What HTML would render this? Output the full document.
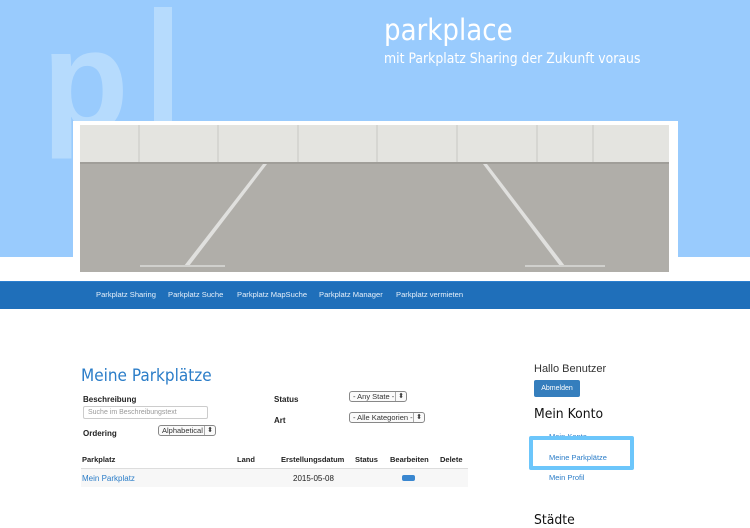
<!DOCTYPE html>
<html><head><meta charset="utf-8"><style>
*{margin:0;padding:0;box-sizing:border-box}
body{width:750px;height:523px;overflow:hidden;background:#fff;font-family:"Liberation Sans",sans-serif;position:relative}
.hdr{position:absolute;left:0;top:0;width:750px;height:257px;background:#99cbfd;overflow:hidden}
.big{position:absolute;color:#b6dbfd;font-size:142px;line-height:1;font-weight:bold;font-family:"Liberation Sans",sans-serif}
.t1{position:absolute;left:384px;top:13px;color:#fff;font-size:29px;font-family:"DejaVu Sans",sans-serif;transform:scaleX(0.9);transform-origin:left top}
.t2{position:absolute;left:384px;top:51px;color:#fff;font-size:14px;font-family:"DejaVu Sans",sans-serif;transform:scaleX(0.89);transform-origin:left top;white-space:nowrap}
.frame{position:absolute;left:73px;top:121px;width:605px;height:159px;background:#fff}
.nav{position:absolute;left:0;top:281px;width:750px;height:28px;background:#1f6fba;border-top:1px solid #2b7fcf}
.nav span{position:absolute;top:8px;color:#e6f0fa;font-size:7.6px;white-space:nowrap}
h2{position:absolute;left:81px;top:366px;color:#2b7dc8;font-size:17px;font-weight:normal;font-family:"DejaVu Sans",sans-serif;transform:scaleX(0.9);transform-origin:left top}
.lb{position:absolute;font-size:8px;font-weight:bold;color:#222}
.sel{position:absolute;height:11px;border:1px solid #888;border-radius:3px;font-size:7.5px;color:#333;padding-left:3px;line-height:9px;background:#fafafa;white-space:nowrap;overflow:hidden}
.sel:after{content:"⬍";position:absolute;right:2px;top:0;font-size:7px;border-left:1px solid #aaa;padding-left:2px;background:#fafafa}
.inp{position:absolute;left:83px;top:406px;width:125px;height:13px;border:1px solid #ccc;border-radius:2px;font-size:7px;color:#999;padding-left:4px;line-height:11px}
.th{position:absolute;top:455px;font-size:7.5px;font-weight:bold;color:#222}
.row{position:absolute;left:81px;top:468px;width:387px;height:19px;background:#f7f7f7;border-top:1px solid #ddd}
.side{position:absolute;font-family:"DejaVu Sans",sans-serif}
</style></head><body>
<div class="hdr">
<div class="big" style="left:42px;top:10px">p</div>
<div style="position:absolute;left:154px;top:7px;width:18px;height:250px;background:#b6dbfd"></div>
<div class="t1">parkplace</div>
<div class="t2">mit Parkplatz Sharing der Zukunft voraus</div>
</div>
<div class="frame"></div>
<svg style="position:absolute;left:80px;top:125px" width="589" height="147" viewBox="0 0 589 147">
<rect width="589" height="38" fill="#e4e4e0"/>
<rect y="38" width="589" height="109" fill="#b0aea9"/>
<rect y="37" width="589" height="2" fill="#a09e99"/>
<g stroke="#c9c9c5" stroke-width="1"><line x1="59" y1="0" x2="59" y2="37"/><line x1="138" y1="0" x2="138" y2="37"/><line x1="218" y1="0" x2="218" y2="37"/><line x1="297" y1="0" x2="297" y2="37"/><line x1="377" y1="0" x2="377" y2="37"/><line x1="457" y1="0" x2="457" y2="37"/><line x1="513" y1="0" x2="513" y2="37"/></g>
<polygon points="183,39 187,39 109,141 104,141" fill="#e0e0de"/>
<polygon points="403,39 407,39 485,141 480,141" fill="#e0e0de"/>
<rect x="60" y="140" width="85" height="2" fill="#d0d0cd"/>
<rect x="445" y="140" width="80" height="2" fill="#d0d0cd"/>
</svg>
<div class="nav">
<span style="left:96px">Parkplatz Sharing</span>
<span style="left:168px">Parkplatz Suche</span>
<span style="left:237px">Parkplatz MapSuche</span>
<span style="left:319px">Parkplatz Manager</span>
<span style="left:396px">Parkplatz vermieten</span>
</div>
<h2>Meine Parkplätze</h2>
<div class="lb" style="left:83px;top:395px">Beschreibung</div>
<div class="inp">Suche im Beschreibungstext</div>
<div class="lb" style="left:83px;top:429px">Ordering</div>
<div class="sel" style="left:158px;top:425px;width:58px">Alphabetical</div>
<div class="lb" style="left:274px;top:395px">Status</div>
<div class="sel" style="left:349px;top:391px;width:58px">- Any State -</div>
<div class="lb" style="left:274px;top:416px">Art</div>
<div class="sel" style="left:349px;top:412px;width:76px">- Alle Kategorien -</div>
<div class="th" style="left:82px">Parkplatz</div>
<div class="th" style="left:237px">Land</div>
<div class="th" style="left:281px">Erstellungsdatum</div>
<div class="th" style="left:355px">Status</div>
<div class="th" style="left:390px">Bearbeiten</div>
<div class="th" style="left:440px">Delete</div>
<div class="row">
<span style="position:absolute;left:1px;top:5px;font-size:8px;color:#2b7dc8">Mein Parkplatz</span>
<span style="position:absolute;left:212px;top:5px;font-size:8px;color:#222">2015-05-08</span>
<span style="position:absolute;left:321px;top:6px;width:13px;height:6px;border-radius:2px;background:#3a87d0"></span>
</div>
<div class="side" style="left:534px;top:363px;font-size:11px;color:#333;font-family:'Liberation Sans',sans-serif">Hallo Benutzer</div>
<div style="position:absolute;left:534px;top:380px;width:46px;height:17px;background:#357ebd;border-radius:2px;color:#fff;font-size:7px;text-align:center;line-height:17px">Abmelden</div>
<div class="side" style="left:534px;top:406px;font-size:13.5px;color:#111;transform:scaleX(0.92);transform-origin:left top">Mein Konto</div>
<div style="position:absolute;left:549px;top:432px;font-size:7.5px;color:#2b7dc8">Mein Konto</div>
<div style="position:absolute;left:529px;top:436px;width:105px;height:34px;border:4px solid #6cc6fb;border-radius:2px;background:#fff"></div>
<div style="position:absolute;left:549px;top:453px;font-size:7.5px;color:#2b7dc8">Meine Parkplätze</div>
<div style="position:absolute;left:549px;top:473px;font-size:7.5px;color:#2b7dc8">Mein Profil</div>
<div class="side" style="left:534px;top:512px;font-size:13.5px;color:#111;transform:scaleX(0.92);transform-origin:left top">Städte</div>
</body></html>
